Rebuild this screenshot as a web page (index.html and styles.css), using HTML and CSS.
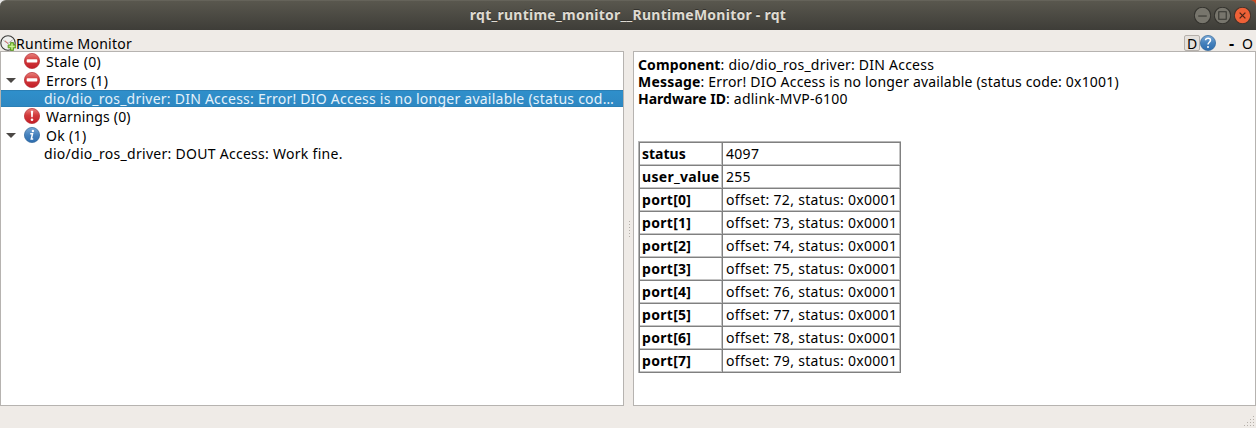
FILE: index.html
```html
<!DOCTYPE html>
<html lang="en">
<head>
<meta charset="utf-8">
<title>rqt_runtime_monitor__RuntimeMonitor - rqt</title>
<link rel="stylesheet" href="styles.css">
</head>
<body>
<svg class="defs" width="0" height="0" aria-hidden="true">
  <defs>
    <linearGradient id="red" x1="0" y1="0" x2="0" y2="1"><stop offset="0" stop-color="#e8807b"/><stop offset=".45" stop-color="#d23b3c"/><stop offset="1" stop-color="#c31d27"/></linearGradient>
    <linearGradient id="blue" x1="0" y1="0" x2="0" y2="1"><stop offset="0" stop-color="#7ba9d6"/><stop offset=".5" stop-color="#4682bd"/><stop offset="1" stop-color="#2c6cae"/></linearGradient>
    <symbol id="stop" viewBox="0 0 16 16"><circle cx="8" cy="8" r="7.6" fill="url(#red)" stroke="#b52a30" stroke-width=".7"/><rect x="2.7" y="6.2" width="10.6" height="3.4" rx=".8" fill="#fff"/></symbol>
    <symbol id="warn" viewBox="0 0 16 16"><circle cx="8" cy="8" r="7.6" fill="url(#red)" stroke="#b52a30" stroke-width=".7"/><path d="M6.8 2.7h2.4l-.5 6.6H7.3z" fill="#fff"/><circle cx="8" cy="11.8" r="1.3" fill="#fff"/></symbol>
    <symbol id="info" viewBox="0 0 16 16"><circle cx="8" cy="8" r="7.6" fill="url(#blue)" stroke="#316699" stroke-width=".7"/><circle cx="8.9" cy="4" r="1.2" fill="#fff"/><path d="M6.2 6.8h2.3L7.3 12h1.9" fill="none" stroke="#fff" stroke-width="1.5"/></symbol>
    <symbol id="help" viewBox="0 0 16 16"><circle cx="8" cy="8" r="7.6" fill="url(#blue)" stroke="#316699" stroke-width=".7"/><path d="M5.5 5.2C5.7 2.5 10.6 2.4 10.5 5.3 10.5 7.2 8 7.3 8 9.6" fill="none" stroke="#fff" stroke-width="1.5"/><circle cx="8" cy="12" r="1" fill="#fff"/></symbol>
  </defs>
</svg>
<div class="desktop">
<header class="titlebar">
  <h1 class="window-title">rqt_runtime_monitor__RuntimeMonitor - rqt</h1>
  <div class="window-buttons">
    <svg class="window-button" viewBox="0 0 16 16"><circle cx="8" cy="8" r="7.7" fill="#77756c" stroke="#35342f" stroke-width="1"/><path d="M4 8.5h8" stroke="#35342f"/></svg>
    <svg class="window-button" viewBox="0 0 16 16"><circle cx="8" cy="8" r="7.7" fill="#77756c" stroke="#35342f" stroke-width="1"/><path d="M4.5 4.5h7v7h-7z" fill="none" stroke="#35342f"/></svg>
    <svg class="window-button" viewBox="0 0 16 16"><circle cx="8" cy="8" r="7.7" fill="#ee6137" stroke="#45352d" stroke-width="1"/><path d="M5.3 5.3l5.4 5.4M10.7 5.3l-5.4 5.4" stroke="#4c2417" stroke-width="1.2"/></svg>
  </div>
</header>
</div>
<div class="dockbar">
  <svg class="dock-icon" viewBox="0 0 16 16"><circle cx="8" cy="8" r="7.2" fill="#f0f0ee" stroke="#3a3a38" stroke-width="1.1"/><path d="M3.5 5.5L8 8.5l4.5-3.5" fill="none" stroke="#aaa" stroke-width="1"/><path d="M5 5.8L8 8.5" stroke="#dc6464" stroke-width="1"/><path d="M10.5 7.5h3v2.4h2.4v3h-2.4v2.6h-3v-2.6H8.1v-3h2.4z" fill="#8fcf46" stroke="#568f22" stroke-width=".8"/><path d="M12 9v5M9.5 11.4h5" stroke="#d5f0a8" stroke-width="1"/></svg>
  <span class="dock-title">Runtime Monitor</span>
  <div class="dock-actions">
    <button class="dock-button">D</button>
    <svg class="help-icon"><use href="#help"/></svg>
    <span class="dock-minimize">-</span>
    <span class="dock-float">O</span>
  </div>
</div>
<main class="splitter">
  <section class="pane tree">
    <div class="row"><span class="arrow"></span><svg class="icon"><use href="#stop"/></svg><span class="label stale">Stale (0)</span></div>
    <div class="row"><span class="arrow open"></span><svg class="icon"><use href="#stop"/></svg><span class="label errors">Errors (1)</span></div>
    <div class="row child selected"><span class="label error-item">dio/dio_ros_driver: DIN Access: Error! DIO Access is no longer available (status cod…</span></div>
    <div class="row"><span class="arrow"></span><svg class="icon"><use href="#warn"/></svg><span class="label warnings">Warnings (0)</span></div>
    <div class="row"><span class="arrow open"></span><svg class="icon"><use href="#info"/></svg><span class="label ok">Ok (1)</span></div>
    <div class="row child"><span class="label ok-item">dio/dio_ros_driver: DOUT Access: Work fine.</span></div>
  </section>
  <div class="handle"><i></i><i></i><i></i><i></i><i></i><i></i></div>
  <section class="pane details">
    <p class="line"><b class="k-component">Component</b><span class="v-component">: dio/dio_ros_driver: DIN Access</span></p>
    <p class="line"><b class="k-message">Message</b><span class="v-message">: Error! DIO Access is no longer available (status code: 0x1001)</span></p>
    <p class="line"><b class="k-hardware">Hardware ID</b><span class="v-hardware">: adlink-MVP-6100</span></p>
    <div class="values">
      <b class="cell status">status</b><span class="cell">4097</span>
      <b class="cell user">user_value</b><span class="cell">255</span>
      <b class="cell">port[0]</b><span class="cell">offset: 72, status: 0x0001</span>
      <b class="cell">port[1]</b><span class="cell">offset: 73, status: 0x0001</span>
      <b class="cell">port[2]</b><span class="cell">offset: 74, status: 0x0001</span>
      <b class="cell">port[3]</b><span class="cell">offset: 75, status: 0x0001</span>
      <b class="cell">port[4]</b><span class="cell">offset: 76, status: 0x0001</span>
      <b class="cell">port[5]</b><span class="cell">offset: 77, status: 0x0001</span>
      <b class="cell">port[6]</b><span class="cell">offset: 78, status: 0x0001</span>
      <b class="cell">port[7]</b><span class="cell">offset: 79, status: 0x0001</span>
    </div>
  </section>
</main>
<footer class="statusbar">
  <svg class="grip" viewBox="0 0 11 11" shape-rendering="crispEdges"><path fill="#b5b0aa" d="M9 0h1v1h-1zM6 3h1v1h-1zM9 3h1v1h-1zM3 6h1v1h-1zM6 6h1v1h-1zM9 6h1v1h-1zM0 9h1v1h-1zM3 9h1v1h-1zM6 9h1v1h-1zM9 9h1v1h-1z"/></svg>
</footer>
</body>
</html>
```
FILE: styles.css
```css
* { box-sizing: border-box; }
body {
  margin: 0;
  width: 1256px;
  height: 428px;
  display: flex;
  flex-direction: column;
  overflow: hidden;
  background: #efebe7;
  color: #000;
  font: 14px/17px "Noto Sans", "Open Sans", sans-serif;
  white-space: nowrap;
}
.defs { position: absolute; }
.desktop { height: 30px; flex: none; background: linear-gradient(90deg, #e6e6e6 50%, #c8481f 50%); }
.titlebar {
  height: 30px;
  display: grid;
  grid-template-columns: 1fr auto 1fr;
  align-items: center;
  border-radius: 6px 6px 0 0;
  border-top: 1px solid #65635a;
  background: linear-gradient(#59574e, #3e3d38);
}
.window-title {
  grid-column: 2;
  margin: 0 0 2px;
  color: #dfdbd2;
  font-size: 14px;
  font-weight: 700;
  letter-spacing: .25px;
  line-height: 27px;
  text-shadow: 0 -1px #33322e;
}
.window-buttons { justify-self: end; display: flex; gap: 3px; padding: 0 5px 1px 0; }
.window-button { width: 17px; height: 17px; display: block; }
.dockbar { height: 21px; flex: none; display: flex; align-items: center; padding-top: 5px; }
.dock-icon { width: 16px; height: 16px; }
.dock-title { line-height: 18px; padding-top: 1px; letter-spacing: .27px; }
.dock-actions { margin-left: auto; display: flex; align-items: center; width: 72px; }
.dock-button {
  width: 16px;
  height: 16px;
  padding: 0;
  border: 1px solid #b5b0ab;
  border-radius: 2px;
  background: #e5e1dd;
  color: #000;
  font: inherit;
  line-height: 16px;
}
.help-icon { width: 16px; height: 16px; }
.dock-minimize { margin-left: 13px; width: 13px; font-weight: 700; font-size: 16px; }
.dock-float { padding-top: 1px; }
.splitter { height: 355px; flex: none; display: grid; grid-template-columns: 624px 9px 623px; }
.pane { background: #fff; border: 1px solid #b6b3b0; overflow: hidden; }
.row { height: 19px; display: flex; align-items: center; }
.child { height: 17px; padding-left: 43px; }
.selected {
  color: #e4f1fa;
  background: linear-gradient(#2f8fcb, #2e88c2);
  border: 1px solid #2b80b6;
  border-width: 1px 0;
}
.selected .label { line-height: 15px; }
.stale, .ok { letter-spacing: .33px; }
.errors { letter-spacing: .2px; }
.warnings { letter-spacing: .17px; }
.error-item { letter-spacing: .24px; }
.ok-item { letter-spacing: .28px; }
.arrow { width: 23px; padding-left: 5px; }
.open::before {
  content: "";
  display: block;
  width: 10px;
  height: 5px;
  background: #4b4845;
  clip-path: polygon(0 0, 100% 0, 50% 100%);
}
.icon { width: 16px; height: 16px; margin: 0 6px 1px 0; }
.handle {
  display: flex;
  flex-direction: column;
  align-items: center;
  justify-content: center;
  gap: 2px;
  padding-left: 2px;
}
.handle i { width: 1px; height: 1px; background: #b5b0aa; }
.details { padding: 4px; }
.line { margin: 0; height: 17px; }
.k-component { letter-spacing: .1px; }
.k-message { letter-spacing: .2px; }
.v-component, .v-hardware { letter-spacing: .23px; }
.v-message { letter-spacing: .18px; }
.values {
  width: 263px;
  margin: 34px 0 0 0;
  display: grid;
  grid-template-columns: 83px 178px;
  border: 1px solid #b7b7b7;
  border-width: 1px 0 0 1px;
  box-shadow: inset 1px 1px #808080;
  padding: 1px 0 0 1px;
}
.cell {
  height: 23px;
  padding-left: 3px;
  line-height: 22px;
  letter-spacing: .3px;
  border: 1px solid #808080;
  border-width: 0 1px 1px 0;
  box-shadow: inset -1px -1px #c4c4c4;
}
b.cell { padding-left: 2px; }
.status { letter-spacing: 0; }
.statusbar { flex: 1; display: flex; justify-content: flex-end; align-items: flex-end; padding: 0 1px 1px 0; }
.grip { width: 11px; height: 11px; }
```
